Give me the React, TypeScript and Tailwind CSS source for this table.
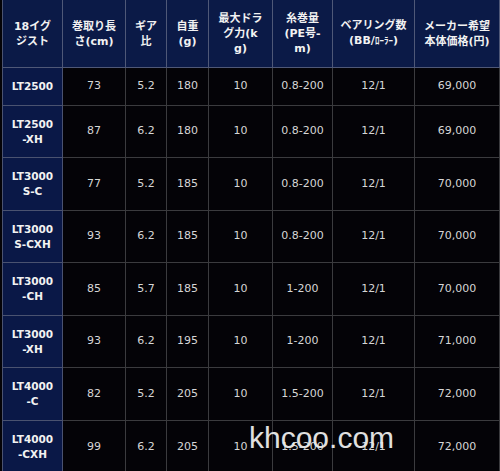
import React from 'react';

const widths = ['w-[60px]', 'w-[63px]', 'w-[41px]', 'w-[42px]', 'w-[64px]', 'w-[60px]', 'w-[82px]', 'flex-1'];

const header: React.ReactNode[] = [
  <>18イグ<br />ジスト</>,
  <>巻取り長<br />さ(cm)</>,
  <>ギア<br />比</>,
  <>自重<br />(g)</>,
  <>最大ドラ<br />グ力(k<br />g)</>,
  <>糸巻量<br />(PE号-<br />m)</>,
  <>ベアリング数<br />(BB/<span className="text-[9px]">ﾛｰﾗｰ</span>)</>,
  <>メーカー希望<br />本体価格(円)</>,
];

const rows = [
  { h: 'h-[38px]', model: ['LT2500'], v: ['73', '5.2', '180', '10', '0.8-200', '12/1', '69,000'] },
  { h: 'h-[52px]', model: ['LT2500', '-XH'], v: ['87', '6.2', '180', '10', '0.8-200', '12/1', '69,000'] },
  { h: 'h-[53px]', model: ['LT3000', 'S-C'], v: ['77', '5.2', '185', '10', '0.8-200', '12/1', '70,000'] },
  { h: 'h-[52px]', model: ['LT3000', 'S-CXH'], v: ['93', '6.2', '185', '10', '0.8-200', '12/1', '70,000'] },
  { h: 'h-[53px]', model: ['LT3000', '-CH'], v: ['85', '5.7', '185', '10', '1-200', '12/1', '70,000'] },
  { h: 'h-[52px]', model: ['LT3000', '-XH'], v: ['93', '6.2', '195', '10', '1-200', '12/1', '71,000'] },
  { h: 'h-[53px]', model: ['LT4000', '-C'], v: ['82', '5.2', '205', '10', '1.5-200', '12/1', '72,000'] },
  { h: 'h-[53px]', model: ['LT4000', '-CXH'], v: ['99', '6.2', '205', '10', '1.5-200', '12/1', '72,000'] },
];

const font = { fontFamily: '"DejaVu Sans", "Noto Sans CJK JP", sans-serif' };

export default function App() {
  return (
    <div className="relative w-[500px] h-[471px] overflow-hidden bg-[#040307]" style={font}>
      <div className="ml-[2px] border-l border-[#4a5270]">
        {/* header */}
        <div className="flex h-[68px] bg-[#0b1a47]">
          {header.map((h, i) => (
            <div
              key={i}
              className={`${widths[i]} shrink-0 flex items-center justify-center text-center border-r border-b border-[#4f5877] text-[11px] leading-[15px] font-bold text-[#f2f2f2]`}
            >
              <div>{h}</div>
            </div>
          ))}
        </div>

        {rows.map((r, ri) => (
          <div key={ri} className={`flex ${r.h}`}>
            <div className="w-[60px] shrink-0 flex items-center justify-center text-center bg-[#0a1847] border-r border-b border-[#4a5270] text-[10.5px] leading-[15px] font-bold text-[#f2f2f2]">
              <div>
                {r.model.map((m, mi) => (
                  <div key={mi}>{m}</div>
                ))}
              </div>
            </div>
            {r.v.map((v, vi) => (
              <div
                key={vi}
                className={`${widths[vi + 1]} shrink-0 flex items-center justify-center border-r border-b border-[#3b3b3e] text-[11px] text-[#d6d6d6]`}
              >
                {v}
              </div>
            ))}
          </div>
        ))}
      </div>

      {/* watermark */}
      <div
        className="absolute left-[249px] top-[423px] text-[30px] leading-none text-[#ececec] opacity-95"
        style={{ fontFamily: '"Liberation Sans", Arial, sans-serif' }}
      >
        khcoo.com
      </div>
    </div>
  );
}
